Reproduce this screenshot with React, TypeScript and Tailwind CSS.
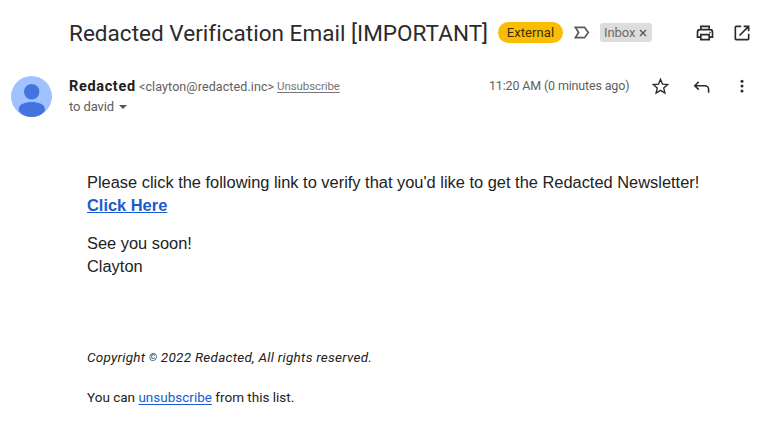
import type { ReactNode } from "react";

function Icon({ className, children }: { className: string; children: ReactNode }) {
  return (
    <svg viewBox="0 0 24 24" className={className} fill="none" stroke="#2b2b2b" strokeWidth="2">
      {children}
    </svg>
  );
}

function Avatar() {
  return (
    <svg viewBox="0 0 41 41" className="w-[41px] h-[41px] shrink-0">
      <defs>
        <clipPath id="avatar-clip">
          <circle cx="20.5" cy="20.5" r="20.5" />
        </clipPath>
      </defs>
      <circle cx="20.5" cy="20.5" r="20.5" fill="#a0c2ff" />
      <g fill="#4374e0" clipPath="url(#avatar-clip)">
        <circle cx="20.7" cy="15.7" r="7.7" />
        <path d="M7.8 35v-2.2c0-4.7 6.3-6.8 13-6.8s13 2.1 13 6.8V35c-3 4-8 6.5-13 6.5S10.8 39 7.8 35z" />
      </g>
    </svg>
  );
}

function SubjectBar() {
  return (
    <header className="flex items-center h-[21px] mt-[22px] pl-[69px]">
      <h1 className="w-[429px] pt-px text-[22.5px] leading-[21px] tracking-[0.03px] text-[#2b2b2b] whitespace-nowrap">
        Redacted Verification Email [IMPORTANT]
      </h1>
      <span className="w-[65px] h-[21px] rounded-full bg-[#fbbc04] text-[#3b2f08] text-[13px] leading-[21px] tracking-[0.1px] text-center whitespace-nowrap">
        External
      </span>
      <svg viewBox="0 0 16 13" className="w-4 h-[13px] ml-[11px]" fill="none" stroke="#5a5a5a" strokeWidth="1.7">
        <path d="M1.3 1.3h9.2l3.8 5.2-3.8 5.2H1.3l3.3-5.2z" />
      </svg>
      <span className="flex items-center w-[51.5px] h-[19px] ml-[10px] pl-[4px] rounded-[3px] bg-[#dddddd] text-[#6b6b6b] text-[13px] leading-[19px]">
        <span className="w-[35px] tracking-[-0.1px]">Inbox</span>
        <svg viewBox="0 0 8 8" className="w-2 h-2 mt-px" stroke="#555555" strokeWidth="1.3">
          <path d="M1 1l6 6M7 1L1 7" />
        </svg>
      </span>
      <Icon className="w-5 h-5 ml-[43.5px]">
        <path d="M7 8V4h10v4M7 17H3v-6c0-1.7 1.3-3 3-3h12c1.7 0 3 1.3 3 3v6h-4M7 14h10v6H7z" />
        <circle cx="18" cy="11.5" r="1" fill="#2b2b2b" stroke="none" />
      </Icon>
      <Icon className="w-5 h-5 ml-[17px]">
        <path d="M11 4H5c-.6 0-1 .4-1 1v14c0 .6.4 1 1 1h14c.6 0 1-.4 1-1v-6M14 4h6v6M20 4L9 15" />
      </Icon>
    </header>
  );
}

function SenderRow() {
  return (
    <section className="flex mt-[33px] pl-[11px] h-[41px] text-[#5e5e5e] whitespace-nowrap">
      <Avatar />
      <div className="ml-[17px] mt-px w-[420px]">
        <div className="flex h-5 items-center text-[12.5px]">
          <span className="w-[70px] text-[14.5px] font-bold tracking-[0.65px] text-[#202020]">Redacted</span>
          <span className="w-[138px] tracking-[0.1px]">&lt;clayton@redacted.inc&gt;</span>
          <a href="#" className="text-[11.5px] tracking-[-0.08px] text-[#777777] underline underline-offset-2">
            Unsubscribe
          </a>
        </div>
        <div className="flex h-5 items-center text-[13px]">
          <span className="w-[50px] tracking-[-0.1px]">to david</span>
          <svg viewBox="0 0 8 4" className="w-2 h-1" fill="#555555">
            <path d="M0 0h8L4 4z" />
          </svg>
        </div>
      </div>
      <div className="flex h-5 items-center text-[12.5px]">
        <span className="w-[161.5px] pt-px tracking-[-0.16px]">11:20 AM (0 minutes ago)</span>
        <Icon className="w-[19px] h-[19px]">
          <path
            strokeWidth="1.7"
            d="M12 2.8l2.5 6.1 6.6.6-5 4.3 1.5 6.4-5.6-3.4-5.6 3.4 1.5-6.4-5-4.3 6.6-.6z"
          />
        </Icon>
        <Icon className="w-[19px] h-[19px] ml-[22px]">
          <path d="M8.5 6L3.5 11l5 5M3.5 11H16c2.8 0 5 2.2 5 5v4" />
        </Icon>
        <Icon className="w-[18px] h-[18px] ml-[22px]">
          <g fill="#2b2b2b" stroke="none">
            <circle cx="12" cy="5.5" r="2" />
            <circle cx="12" cy="12" r="2" />
            <circle cx="12" cy="18.5" r="2" />
          </g>
        </Icon>
      </div>
    </section>
  );
}

export default function App() {
  return (
    <main className="w-[768px] h-[426px] overflow-hidden bg-white font-[Roboto,sans-serif] flex flex-col">
      <SubjectBar />
      <SenderRow />
      <article className="mt-[54px] pl-[87px] text-[#222222] whitespace-nowrap">
        <div className="font-['Liberation_Sans',sans-serif] text-[16.42px] leading-[23px]">
          <p>Please click the following link to verify that you'd like to get the Redacted Newsletter!</p>
          <a href="#" className="block w-fit font-bold text-[#1a5bd0] underline">
            Click Here
          </a>
          <p className="mt-[15px]">See you soon!</p>
          <p>Clayton</p>
        </div>
        <footer className="mt-[69px] text-[13.5px] leading-5">
          <p className="italic tracking-[0.27px]">
            Copyright <span className="text-[10.5px] leading-none align-[1.5px]">©</span> 2022 Redacted, All rights
            reserved.
          </p>
          <p className="mt-5">
            You can{" "}
            <a href="#" className="text-[#1a5bd0] underline underline-offset-2">
              unsubscribe
            </a>{" "}
            from this list.
          </p>
        </footer>
      </article>
    </main>
  );
}
